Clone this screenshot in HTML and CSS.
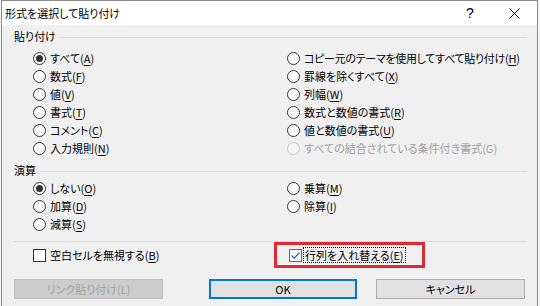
FILE: index.html
```html
<!DOCTYPE html>
<html lang="ja">
<head>
<meta charset="utf-8">
<title>形式を選択して貼り付け</title>
<link rel="stylesheet" href="styles.css">
</head>
<body>
<div class="window">
  <div class="titlebar">
    <span class="title">形式を選択して貼り付け</span>
    <span class="tbtn help">?</span>
    <span class="tbtn close"><svg width="11" height="11" viewBox="0 0 11 11"><path d="M0.5 0.5 L10.5 10.5 M10.5 0.5 L0.5 10.5" stroke="#000" stroke-width="1" fill="none"/></svg></span>
  </div>
  <div class="content">
    <div class="group-label"><span>貼り付け</span></div>
    <div class="options six">
      <div class="opt"><span class="radio on"></span><span>すべて(<u>A</u>)</span></div>
      <div class="opt"><span class="radio"></span><span>数式(<u>F</u>)</span></div>
      <div class="opt"><span class="radio"></span><span>値(<u>V</u>)</span></div>
      <div class="opt"><span class="radio"></span><span>書式(<u>T</u>)</span></div>
      <div class="opt"><span class="radio"></span><span>コメント(<u>C</u>)</span></div>
      <div class="opt"><span class="radio"></span><span>入力規則(<u>N</u>)</span></div>
      <div class="opt"><span class="radio"></span><span class="narrow">コピー元のテーマを使用してすべて貼り付け(<u>H</u>)</span></div>
      <div class="opt"><span class="radio"></span><span>罫線を除くすべて(<u>X</u>)</span></div>
      <div class="opt"><span class="radio"></span><span>列幅(<u>W</u>)</span></div>
      <div class="opt"><span class="radio"></span><span>数式と数値の書式(<u>R</u>)</span></div>
      <div class="opt"><span class="radio"></span><span>値と数値の書式(<u>U</u>)</span></div>
      <div class="opt disabled"><span class="radio"></span><span>すべての結合されている条件付き書式(G)</span></div>
    </div>
    <div class="group-label calc-label"><span>演算</span></div>
    <div class="options three">
      <div class="opt"><span class="radio on"></span><span>しない(<u>O</u>)</span></div>
      <div class="opt"><span class="radio"></span><span>加算(<u>D</u>)</span></div>
      <div class="opt"><span class="radio"></span><span>減算(<u>S</u>)</span></div>
      <div class="opt"><span class="radio"></span><span>乗算(<u>M</u>)</span></div>
      <div class="opt"><span class="radio"></span><span>除算(<u>I</u>)</span></div>
    </div>
    <div class="sep"></div>
    <div class="options one">
      <div class="opt"><span class="check"></span><span>空白セルを無視する(<u>B</u>)</span></div>
      <div class="opt right-check"><span class="check on"><svg width="11" height="11" viewBox="0 0 11 11"><path d="M1.5 5.5 L4.2 8.2 L9.5 2.5" stroke="#1e6fc8" stroke-width="1.3" fill="none"/></svg></span><span class="focus">行列を入れ替える(<u>E</u>)</span></div>
    </div>
    <div class="buttons">
      <div class="btn disabled">リンク貼り付け(L)</div>
      <div class="btn default ok">OK</div>
      <div class="btn cancel">キャンセル</div>
    </div>
  </div>
  <div class="highlight"></div>
</div>
</body>
</html>
```

FILE: styles.css
```css
body {
  margin: 0;
  background: #f4f4f4;
  font-family: "Noto Sans CJK JP", "Noto Sans", sans-serif;
  font-size: 11px;
  color: #000;
  font-feature-settings: "palt";
}

.window {
  position: relative;
  margin-left: 1px;
  width: 537px;
  height: 306px;
  box-sizing: border-box;
  border: 1px solid #8c8c8c;
  border-bottom: none;
  background: #f0f0f0;
  overflow: hidden;
}

.titlebar {
  display: flex;
  align-items: center;
  height: 24px;
  background: #fff;
}

.title {
  flex: 1;
  padding-left: 3px;
  line-height: 24px;
  font-size: 11px;
}

.tbtn {
  width: 46px;
  height: 24px;
  display: flex;
  align-items: center;
  justify-content: center;
}

.help {
  font-family: "Liberation Sans", sans-serif;
  font-size: 14px;
  padding-left: 4px;
  box-sizing: border-box;
}

.close svg {
  display: block;
}

.content {
  padding: 0 10px 0 12px;
}

.group-label {
  display: flex;
  align-items: center;
  gap: 4px;
  height: 14px;
  line-height: 14px;
  margin-top: 4px;
}

.group-label::after {
  content: "";
  flex: 1;
  border-top: 1px solid #dcdcdc;
  margin-top: 2px;
}

.options {
  display: grid;
  grid-template-columns: 254px 1fr;
  grid-auto-flow: column;
  margin-left: 19px;
}

.six {
  grid-template-rows: repeat(6, 18px);
  margin-top: 6px;
}

.calc-label {
  margin-top: 6px;
}

.three {
  grid-template-rows: repeat(3, 18px);
  margin-top: 2px;
}

.sep {
  border-top: 1px solid #dcdcdc;
  margin-top: 8px;
}

.one {
  grid-template-rows: 18px;
  margin-top: 4px;
}

.opt {
  display: flex;
  align-items: center;
  gap: 4px;
  white-space: nowrap;
  line-height: 18px;
}

.narrow {
  letter-spacing: -0.3px;
}

u {
  text-underline-offset: 2px;
}

.radio {
  flex: none;
  position: relative;
  width: 13px;
  height: 13px;
  box-sizing: border-box;
  border: 1px solid #333;
  border-radius: 50%;
  background: #fff;
}

.radio.on::after {
  content: "";
  position: absolute;
  left: 2px;
  top: 2px;
  width: 7px;
  height: 7px;
  border-radius: 50%;
  background: #333;
}

.disabled {
  color: #a0a0a0;
}

.opt.disabled .radio {
  border-color: #c6c6c6;
  background: #f5f5f5;
}

.check {
  flex: none;
  width: 13px;
  height: 13px;
  box-sizing: border-box;
  border: 1px solid #333;
  background: #fff;
}

.check svg {
  display: block;
}

.check.on {
  border-color: #3a6fa8;
}

.right-check {
  margin-left: 2px;
  gap: 2px;
}

.focus {
  outline: 1px dotted #000;
  line-height: 14px;
  padding: 0 1px;
}

.buttons {
  display: flex;
  margin-top: 15px;
}

.btn {
  width: 149px;
  height: 20px;
  box-sizing: border-box;
  border: 1px solid #adadad;
  background: #e1e1e1;
  display: flex;
  align-items: center;
  justify-content: center;
  line-height: 16px;
}

.btn.disabled {
  background: #cccccc;
  border-color: #bfbfbf;
  color: #a3a3a3;
}

.btn.default {
  border: 2px solid #0078d7;
}

.ok {
  width: 148px;
  margin-left: 46px;
}

.cancel {
  margin-left: 19px;
}

.highlight {
  position: absolute;
  left: 272px;
  top: 241px;
  width: 151px;
  height: 26px;
  box-sizing: border-box;
  border: 3px solid #df2a33;
}
```
